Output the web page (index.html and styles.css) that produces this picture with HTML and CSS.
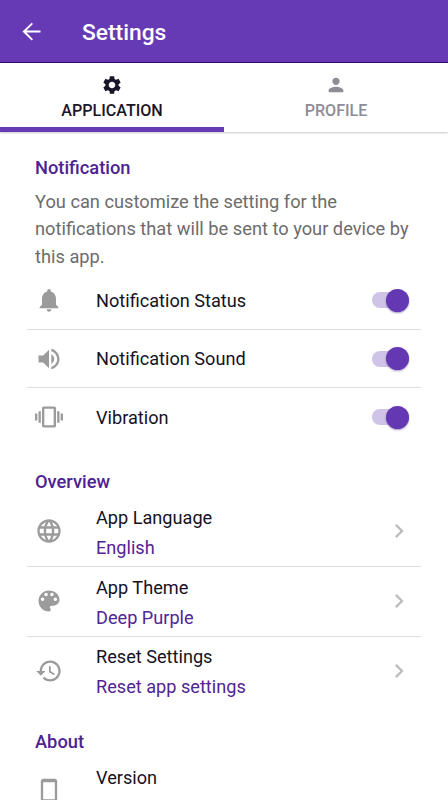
FILE: index.html
```html
<!DOCTYPE html>
<html lang="en">
<head>
<meta charset="utf-8">
<title>Settings</title>
<link rel="stylesheet" href="styles.css">
</head>
<body>
<header class="bar">
  <svg class="back" viewBox="0 0 24 24"><path d="M20 11.200H7.500l5.800-5.800L12.200 4.200 4 12.100l8.200 8 1.100-1.200L7.500 12.900H20z"/></svg>
  <h1>Settings</h1>
</header>
<nav class="tabs">
  <div class="tab active">
    <svg viewBox="0 0 24 24"><path d="M19.14 12.94c.04-.3.06-.61.06-.94s-.02-.64-.07-.94l2.03-1.58c.18-.14.23-.41.12-.61l-1.92-3.32c-.12-.22-.37-.29-.59-.22l-2.39.96c-.5-.38-1.03-.7-1.62-.94l-.36-2.54c-.04-.24-.24-.41-.48-.41h-3.84c-.24 0-.43.17-.47.41l-.36 2.54c-.59.24-1.13.57-1.62.94l-2.39-.96c-.22-.08-.47 0-.59.22L2.74 8.87c-.12.21-.08.47.12.61l2.03 1.58c-.05.3-.09.63-.09.94s.02.64.07.94l-2.03 1.58c-.18.14-.23.41-.12.61l1.92 3.32c.12.22.37.29.59.22l2.39-.96c.5.38 1.03.7 1.62.94l.36 2.54c.05.24.24.41.48.41h3.84c.24 0 .44-.17.47-.41l.36-2.54c.59-.24 1.13-.56 1.62-.94l2.39.96c.22.08.47 0 .59-.22l1.92-3.32c.12-.22.07-.47-.12-.61l-2.01-1.58zM12 15.6c-1.98 0-3.6-1.62-3.6-3.6s1.62-3.6 3.6-3.6 3.6 1.62 3.6 3.6-1.62 3.6-3.6 3.6z"/></svg>
    <span>APPLICATION</span>
  </div>
  <div class="tab">
    <svg viewBox="0 0 24 24"><path d="M12 12c2.21 0 4-1.79 4-4s-1.79-4-4-4-4 1.79-4 4 1.79 4 4 4zm0 2c-2.67 0-8 1.34-8 4v2h16v-2c0-2.66-5.33-4-8-4z"/></svg>
    <span>PROFILE</span>
  </div>
</nav>
<main>
  <section class="notifications">
    <h2>Notification</h2>
    <p class="intro">You can customize the setting for the<br>notifications that will be sent to your device by<br>this app.</p>
    <div class="row">
      <svg class="icon" viewBox="0 0 24 24"><path d="M12 22c1.100 0 2-.9 2-2h-4c0 1.100.9 2 2 2zm6-6v-5c0-3.070-1.640-5.640-4.500-6.320V4c0-.83-.67-1.500-1.500-1.500s-1.500.67-1.500 1.500v.68C7.630 5.360 6 7.920 6 11v5l-2 2v1h16v-1l-2-2z"/></svg>
      <span class="label">Notification Status</span>
      <span class="switch"></span>
    </div>
    <div class="row">
      <svg class="icon" viewBox="0 0 24 24"><path d="M3 9v6h4l5 5V4L7 9H3zm13.500 3c0-1.770-1.020-3.290-2.500-4.030v8.050c1.480-.73 2.500-2.250 2.500-4.020zM14 3.230v2.060c2.890.86 5 3.540 5 6.710s-2.110 5.850-5 6.710v2.060c4.010-.91 7-4.490 7-8.770s-2.990-7.860-7-8.770z"/></svg>
      <span class="label">Notification Sound</span>
      <span class="switch"></span>
    </div>
    <div class="row">
      <svg class="icon" viewBox="0 0 24 24"><path d="M0 15h2V9H0v6zm3 2h2V7H3v10zm19-8v6h2V9h-2zm-3 8h2V7h-2v10zM16.500 3h-9C6.670 3 6 3.670 6 4.500v15c0 .83.67 1.500 1.500 1.500h9c.83 0 1.500-.67 1.500-1.500v-15c0-.83-.67-1.500-1.500-1.500zM16 19H8V5h8v14z"/></svg>
      <span class="label">Vibration</span>
      <span class="switch"></span>
    </div>
  </section>
  <section class="overview">
    <h2>Overview</h2>
    <div class="row tall">
      <svg class="icon" viewBox="0 0 24 24"><path d="M11.990 2C6.470 2 2 6.480 2 12s4.470 10 9.990 10C17.520 22 22 17.520 22 12S17.520 2 11.990 2zm6.930 6h-2.950c-.32-1.250-.78-2.450-1.380-3.560 1.840.63 3.370 1.910 4.330 3.560zM12 4.040c.83 1.200 1.480 2.530 1.910 3.960h-3.820c.43-1.430 1.080-2.760 1.910-3.960zM4.260 14C4.100 13.360 4 12.690 4 12s.1-1.360.26-2h3.380c-.08.66-.14 1.320-.14 2s.06 1.340.14 2H4.260zm.82 2h2.950c.32 1.250.78 2.450 1.380 3.560-1.840-.63-3.370-1.900-4.330-3.560zm2.950-8H5.080c.96-1.660 2.490-2.930 4.330-3.560C8.810 5.550 8.350 6.750 8.030 8zM12 19.960c-.83-1.200-1.480-2.530-1.910-3.960h3.820c-.43 1.430-1.080 2.760-1.910 3.960zM14.340 14H9.660c-.09-.66-.16-1.320-.16-2s.07-1.350.16-2h4.680c.09.65.16 1.320.16 2s-.07 1.340-.16 2zm.25 5.560c.6-1.110 1.060-2.310 1.380-3.560h2.950c-.96 1.650-2.490 2.930-4.330 3.560zM16.360 14c.08-.66.14-1.320.14-2s-.06-1.340-.14-2h3.380c.16.64.26 1.310.26 2s-.1 1.360-.26 2h-3.380z"/></svg>
      <span class="label">App Language<small>English</small></span>
      <svg class="chevron" viewBox="0 0 24 24"><path d="M10 6L8.590 7.410 13.170 12l-4.580 4.590L10 18l6-6z"/></svg>
    </div>
    <div class="row tall">
      <svg class="icon" viewBox="0 0 24 24"><path d="M12 3c-4.970 0-9 4.030-9 9s4.030 9 9 9c.83 0 1.500-.67 1.500-1.500 0-.39-.15-.74-.39-1.010-.23-.26-.38-.61-.38-.99 0-.83.67-1.500 1.500-1.500H16c2.760 0 5-2.240 5-5 0-4.420-4.030-8-9-8zm-5.500 9c-.83 0-1.500-.67-1.500-1.500S5.670 9 6.500 9 8 9.670 8 10.500 7.330 12 6.500 12zm3-4C8.670 8 8 7.330 8 6.500S8.670 5 9.500 5s1.500.67 1.500 1.500S10.330 8 9.500 8zm5 0c-.83 0-1.500-.67-1.500-1.500S13.670 5 14.500 5s1.500.67 1.500 1.500S15.330 8 14.500 8zm3 4c-.83 0-1.500-.67-1.500-1.500S16.670 9 17.500 9s1.500.67 1.500 1.500-.67 1.500-1.500 1.500z"/></svg>
      <span class="label">App Theme<small>Deep Purple</small></span>
      <svg class="chevron" viewBox="0 0 24 24"><path d="M10 6L8.590 7.410 13.170 12l-4.580 4.590L10 18l6-6z"/></svg>
    </div>
    <div class="row tall">
      <svg class="icon" viewBox="0 0 24 24"><path d="M13 3c-4.970 0-9 4.030-9 9H1l3.890 3.890.07.14L9 12H6c0-3.870 3.130-7 7-7s7 3.130 7 7-3.130 7-7 7c-1.930 0-3.680-.79-4.940-2.060l-1.420 1.420C8.270 19.990 10.510 21 13 21c4.970 0 9-4.030 9-9s-4.030-9-9-9zm-1 5v5l4.280 2.540.72-1.210-3.500-2.080V8H12z"/></svg>
      <span class="label">Reset Settings<small>Reset app settings</small></span>
      <svg class="chevron" viewBox="0 0 24 24"><path d="M10 6L8.590 7.410 13.170 12l-4.580 4.590L10 18l6-6z"/></svg>
    </div>
  </section>
  <section class="about">
    <h2>About</h2>
    <div class="row tall">
      <svg class="icon" viewBox="0 0 24 24"><path d="M17 1.500H7C5.900 1.500 5 2.400 5 3.500v17.500c0 1.100.9 2 2 2h10c1.100 0 2-.9 2-2V3.500c0-1.100-.9-2-2-2zm0 17.500H7V4.400h10z"/></svg>
      <span class="label version">Version</span>
    </div>
  </section>
</main>
</body>
</html>
```
FILE: styles.css
```css
* { box-sizing: border-box; }
html, body { height: 100%; }
body {
  margin: 0;
  overflow: hidden;
  display: flex;
  flex-direction: column;
  background: #fff;
  color: #15121f;
  font-family: Roboto, sans-serif;
}
svg { display: block; fill: currentColor; flex: none; }
h1, h2, p { margin: 0; }
.bar {
  height: 63px;
  flex: none;
  display: flex;
  align-items: center;
  padding-left: 18px;
  background: #673ab5;
  border-bottom: 1px solid #350b70;
  color: #fff;
}
.back { width: 27px; height: 27px; }
h1 { margin: 3px 0 0 37px; font-size: 22.8px; font-weight: 500; line-height: 28px; }
.tabs {
  height: 69px;
  flex: none;
  display: flex;
  box-shadow: 0 1px 2px rgba(0, 0, 0, .22);
}
.tab {
  flex: 1;
  display: flex;
  flex-direction: column;
  align-items: center;
  padding-top: 11px;
  color: #8e8c97;
  font-size: 16.1px;
  font-weight: 500;
  line-height: 20px;
}
.tab svg { width: 22px; height: 22px; margin-bottom: 5px; }
.active { color: #191628; border-bottom: 5px solid #673ab5; }
main { flex: 1; min-height: 0; padding: 22px 27px 0; overflow: hidden; }
h2 {
  padding-left: 8px;
  color: #4e2293;
  font-size: 18.3px;
  font-weight: 500;
  line-height: 27px;
}
.intro {
  margin: 7px 0 1px;
  padding-left: 8px;
  color: #6c6c6c;
  font-size: 18.25px;
  line-height: 27.4px;
  white-space: nowrap;
}
.row {
  height: 58.5px;
  display: flex;
  align-items: center;
  padding: 1px 12px 0 8px;
  border-bottom: 1px solid #dedede;
}
.row:last-child { border-bottom-color: transparent; }
.icon { width: 28px; height: 28px; color: #9b9b9b; }
.label { flex: 1; margin-left: 33px; padding-top: 1px; font-size: 18.15px; line-height: 30px; }
.label small { display: block; color: #522593; font-size: 18.15px; }
.switch {
  display: flex;
  width: 37px;
  height: 16px;
  align-items: center;
  justify-content: flex-end;
  border-radius: 8px;
  background: #d0c3e8;
}
.switch::after {
  content: "";
  width: 23px;
  height: 23px;
  flex: none;
  border-radius: 50%;
  background: #6338b2;
  box-shadow: 0 1px 2px rgba(60, 30, 120, .45);
}
.overview { margin-top: 21px; }
.overview h2, .about h2 { margin-bottom: 3px; }
.tall { height: 69.7px; }
.tall .icon, .tall .chevron { margin-bottom: 2.5px; }
.chevron { width: 28px; height: 28px; margin-right: -4px; color: #bdbdbd; }
.about { margin-top: 21px; }
.version { align-self: flex-start; margin-top: 3px; }
```
